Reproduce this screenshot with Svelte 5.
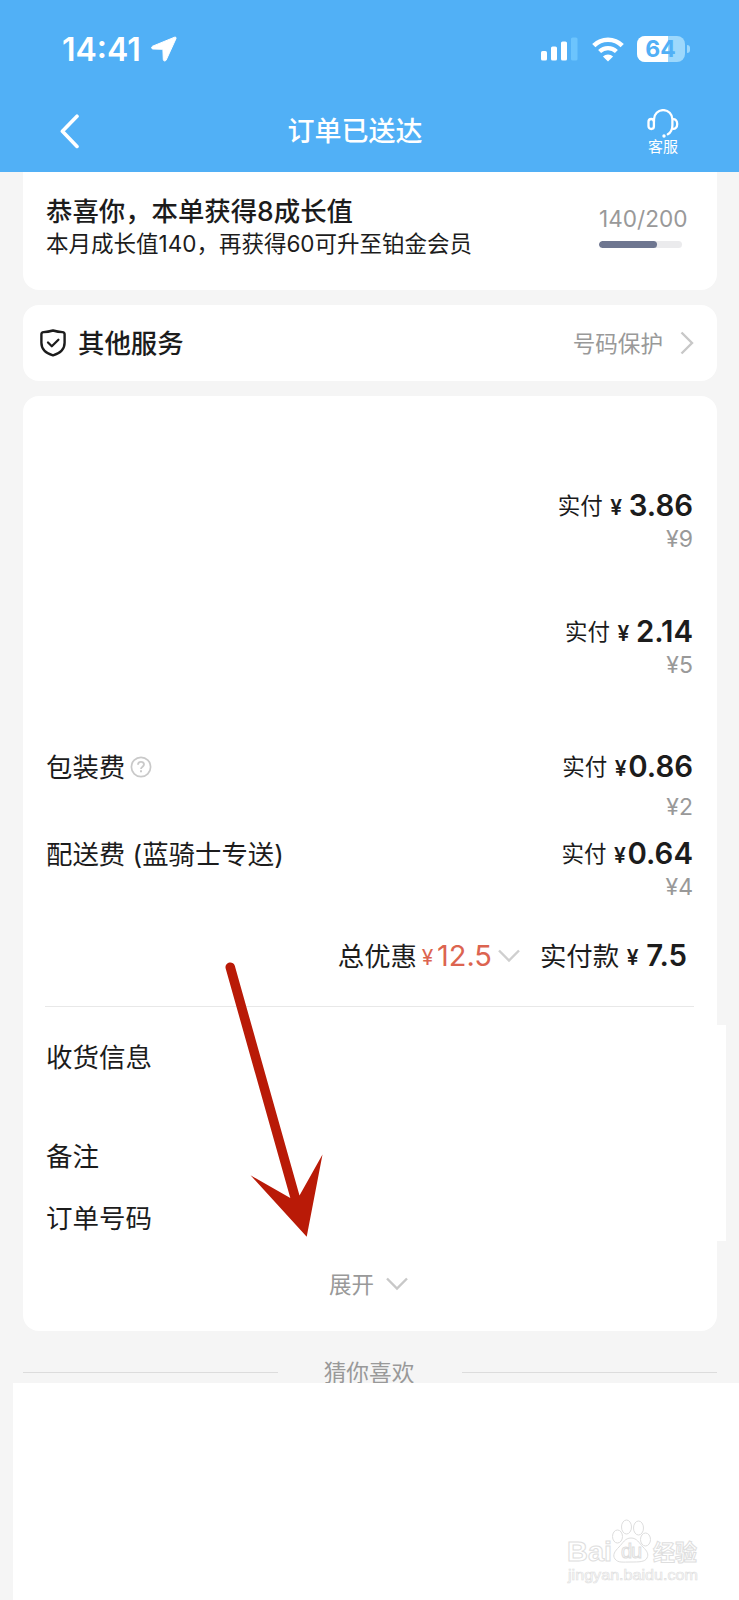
<script>
    // Line items of the order. gap is the space above the item.
    let items = [
        { id: 1, name: '', paid: '3.86', price: 9, gap: 92, spaced: true },
        { id: 2, name: '', paid: '2.14', price: 5, gap: 60, spaced: true },
        { id: 3, name: '包装费', help: true, paid: '0.86', price: 2, gap: 69, tall: true },
        { id: 4, name: '配送费 (蓝骑士专送)', paid: '0.64', price: 4, gap: 8 },
    ];
    let total = { saved: '12.5', paid: '7.5' };
    let growth = { value: 140, max: 200 };
    let battery = 64;
</script>

<main>
    <header>
        <div class="status">
            <span class="status__time">14:41</span>
            <svg class="status__location" width="26" height="26" viewBox="0 0 26 26">
                <path d="M23.6 1.2 1.6 10.2c-1.5.7-1.2 2.7.3 2.8l10 .3.4 10.3c.1 1.6 2.2 1.9 2.9.4L25 2.6c.4-1-.4-1.8-1.4-1.4z" fill="#fff" stroke="#fff" />
            </svg>
            <svg class="status__signal" width="37" height="24" viewBox="0 0 37 24">
                <rect x="0" y="14" width="6" height="9.5" rx="1.6" fill="#fff" />
                <rect x="10" y="9.5" width="6" height="14" rx="1.6" fill="#fff" />
                <rect x="20" y="4.5" width="6" height="19" rx="1.6" fill="#fff" />
                <rect x="30" y="0.5" width="6.5" height="23" rx="1.6" fill="#6cc4fd" />
            </svg>
            <svg class="status__wifi" width="32" height="25" viewBox="0 0 32 25">
                <path d="M1.800 8.700a20 20 0 0 1 28.400 0" fill="none" stroke="#fff" stroke-width="4.6" />
                <path d="M7.6 14.6a12 12 0 0 1 16.800 0" fill="none" stroke="#fff" stroke-width="4.2" />
                <path d="M16 24.400l-5.100-4.900a7.400 7.400 0 0 1 10.200 0z" fill="#fff" />
            </svg>
            <div class="battery">
                <div class="battery__fill" style="width: {battery}%"></div>
                <span class="battery__level">{battery}</span>
            </div>
            <div class="battery__cap"></div>
        </div>
        <nav>
            <svg class="back" width="20" height="35" viewBox="0 0 20 35">
                <path d="M17 2.2 2.4 17.3 17 32.4" fill="none" stroke="#fff" stroke-width="3.6" stroke-linecap="round" stroke-linejoin="round" />
            </svg>
            <h1>订单已送达</h1>
            <div class="service">
                <svg width="32" height="29" viewBox="0 0 32 29" fill="none" stroke="#fff" stroke-width="2.3">
                    <rect x="1.5" y="10" width="5.4" height="10" rx="2.7" />
                    <path d="M7 12.5V10.3a9.2 9.2 0 0 1 18.4 0V16c0 4.4-1.1 7.4-4.6 9.2" stroke-linecap="round" />
                    <path d="M25.4 10.2c3.2-.4 4.8 1.6 4.8 4.8s-1.6 5.3-4.8 4.9" />
                    <circle cx="17" cy="27" r="1.7" fill="#fff" stroke="none" />
                </svg>
                <span>客服</span>
            </div>
        </nav>
    </header>

    <section class="card growth">
        <div>
            <h2>恭喜你，本单获得8成长值</h2>
            <p>本月成长值140，再获得60可升至铂金会员</p>
        </div>
        <div class="growth__side">
            <span>{growth.value}/{growth.max}</span>
            <div class="bar"><div class="bar__fill" style="width: {growth.value / growth.max * 100}%"></div></div>
        </div>
    </section>

    <section class="card other">
        <svg width="26" height="28" viewBox="0 0 26 28" fill="none" stroke="#1c1c1c" stroke-linecap="round" stroke-linejoin="round">
            <path d="M13 1.5c3.4 1 6.200 1.500 9.400 1.600 1.400.1 2.200.8 2.200 2.200v8.500c0 6-4.600 10.600-11.600 12.600C6 24.400 1.400 19.800 1.400 13.800V5.300c0-1.400.8-2.100 2.200-2.200C6.800 3 9.600 2.500 13 1.500z" stroke-width="2.4" />
            <path d="M8 13.500l3.800 3.700 6.600-6.500" stroke-width="2.300" />
        </svg>
        <h2>其他服务</h2>
        <span>号码保护</span>
        <svg class="other__arrow" width="14" height="24" viewBox="0 0 14 24">
            <path d="M1.5 1.5 12 12 1.5 22.5" fill="none" stroke="#c8c8c8" stroke-width="2.4" />
        </svg>
    </section>

    <section class="card order">
        {#each items as item (item.id)}
            <div class="item" style="margin-top: {item.gap}px">
                <div class="item__row">
                    <span class="item__name">{item.name}</span>
                    {#if item.help}
                        <svg class="help" width="22" height="22" viewBox="0 0 22 22" fill="none" stroke="#c9c9c9">
                            <circle cx="11" cy="11" r="9.6" stroke-width="1.7" />
                            <path d="M8 8.8c0-1.8 1.300-2.900 3-2.900s3 1.100 3 2.700c0 2-3 2.200-3 4.400" stroke-width="1.8" />
                            <path d="M11 14.300v2" stroke-width="1.9" />
                        </svg>
                    {/if}
                    <span class="label">实付</span>
                    <span class="yen" class:yen--spaced={item.spaced}>¥</span>
                    <b>{item.paid}</b>
                </div>
                <div class="item__price" class:item__price--tall={item.tall}>¥{item.price}</div>
            </div>
        {/each}

        <div class="total">
            <span>总优惠</span>
            <span class="yen yen--red">¥</span>
            <span class="saved">{total.saved}</span>
            <svg class="total__arrow" width="22" height="14" viewBox="0 0 22 14">
                <path d="M1 1.5 11 11.5 21 1.5" fill="none" stroke="#cfcfcf" stroke-width="2.4" />
            </svg>
            <span>实付款</span>
            <span class="yen yen--total">¥</span>
            <b>{total.paid}</b>
        </div>

        <div class="details">
            <div class="address">收货信息</div>
            <div class="remark">备注</div>
            <div class="number">订单号码</div>
            <div class="patch"></div>
        </div>

        <div class="expand">
            <span>展开</span>
            <svg width="22" height="14" viewBox="0 0 22 14">
                <path d="M1 1.5 11 11.5 21 1.5" fill="none" stroke="#c8c8c8" stroke-width="2.4" />
            </svg>
        </div>
    </section>

    <div class="like"><span>猜你喜欢</span></div>

    <section class="feed">
        <svg class="watermark" width="140" height="70" viewBox="0 0 140 70" fill="#fff" stroke="#dedede">
            <text x="3" y="46" font-size="28" font-weight="700" textLength="45" lengthAdjust="spacingAndGlyphs">Bai</text>
            <ellipse cx="53.5" cy="21.5" rx="5" ry="6.5" />
            <ellipse cx="62.5" cy="12" rx="5" ry="7" />
            <ellipse cx="74.5" cy="13" rx="5" ry="7" />
            <ellipse cx="81.5" cy="24.5" rx="5" ry="6.5" />
            <path d="M67 23c6 0 8 5 12 9 4 4 6 7 4 11s-8 4-16 4-13 1-16-3 0-8 4-12 6-9 12-9z" />
            <text x="57" y="43" font-size="20" textLength="21">du</text>
            <text class="watermark__cjk" x="89" y="45" font-size="22" font-weight="700">经验</text>
            <text x="4" y="65" font-size="14" textLength="130" lengthAdjust="spacingAndGlyphs" stroke-width="0.6">jingyan.baidu.com</text>
        </svg>
    </section>

    <!-- red arrow to the expand button -->
    <svg class="arrow" width="104" height="276" viewBox="222 962 104 276">
        <path d="M225.6 968.2c-1.2-6 7.4-8.2 9.2-2.4L299.5 1195.5 322.5 1154.500 306.7 1236.7 250.5 1175.3 290.3 1198z" fill="#b91a07" />
    </svg>
</main>

<style>
:global(body) {
    background-color: #f5f5f5;
}

main {
    position: relative;
    width: 739px;
    height: 1600px;
    overflow: hidden;
    color: #1c1c1c;
    background-color: #f5f5f5;
    font-family: Inter, 'Noto Sans CJK SC', sans-serif;
}

h1,
h2,
p {
    margin: 0;
}

header {
    height: 172px;
    color: #fff;
    background-color: #51b0f6;
}

.status {
    display: flex;
    align-items: center;
    height: 98px;
    padding-left: 62px;
}

.status__time {
    width: 78px;
    font-size: 32px;
    font-weight: 600;
    white-space: nowrap;
}

.status__location {
    margin-left: 11px;
}

.status__signal {
    margin: 0 14px 0 364px;
}

.battery {
    position: relative;
    width: 48px;
    height: 26px;
    margin-left: 13px;
    overflow: hidden;
    border-radius: 8px;
    background-color: #9dd8fc;
}

.battery__fill {
    height: 26px;
    background-color: #fff;
}

.battery__level {
    position: absolute;
    top: 0;
    left: 0;
    width: 47px;
    color: #51b0f6;
    font-size: 23px;
    font-weight: 700;
    line-height: 26px;
    text-align: center;
}

.battery__cap {
    width: 3px;
    height: 8px;
    margin-left: 2px;
    border-radius: 0 4px 4px 0;
    background-color: #9dd8fc;
}

nav {
    display: flex;
    align-items: center;
    height: 66px;
    padding: 0 60px;
}

h1 {
    flex: 1;
    padding: 0 17px 3px 0;
    font-size: 27px;
    font-weight: 500;
    text-align: center;
}

.service {
    display: flex;
    flex-direction: column;
    align-items: center;
    width: 32px;
    padding-top: 2px;
}

.service span {
    font-size: 15px;
    line-height: 18px;
    white-space: nowrap;
}

.card {
    width: 694px;
    margin: 0 auto 15px 23px;
    border-radius: 16px;
    background-color: #fff;
    box-sizing: border-box;
}

.growth {
    display: flex;
    justify-content: space-between;
    height: 118px;
    padding: 22px 31px 0 23px;
    border-radius: 0 0 16px 16px;
}

h2 {
    font-size: 26.4px;
    font-weight: 500;
    line-height: 34px;
}

.growth p {
    font-size: 22.5px;
    line-height: 32px;
}

.growth__side {
    width: 87px;
    padding-top: 10px;
    color: #999;
    font-size: 22.6px;
    line-height: 30px;
}

.bar {
    width: 83px;
    height: 7px;
    margin-top: 7px;
    overflow: hidden;
    border-radius: 4px;
    background-color: #ebebed;
}

.bar__fill {
    height: 7px;
    border-radius: 4px;
    background-color: #6e7690;
}

.other {
    display: flex;
    align-items: center;
    height: 76px;
    padding: 0 23px 0 17px;
}

.other h2 {
    flex: 1;
    margin-left: 12px;
}

.other span {
    padding-bottom: 2px;
    color: #999;
    font-size: 22.6px;
}

.other__arrow {
    margin-left: 17px;
}

.order {
    display: flex;
    flex-direction: column;
    height: 935px;
    padding: 0 24px 0 23px;
}

.item__row,
.total {
    display: flex;
    align-items: center;
    height: 36px;
    font-size: 26.4px;
    line-height: 36px;
}

.label {
    margin-left: auto;
    font-size: 22.5px;
}

.help {
    margin-left: 5px;
}

.yen {
    width: 15px;
    margin-left: 6px;
    padding-top: 3px;
    font-size: 21px;
    font-weight: 600;
    line-height: 32px;
    text-align: center;
}

.yen--spaced {
    margin-right: 5px;
}

b {
    font-size: 29.4px;
    font-weight: 600;
}

.item__price {
    height: 30px;
    color: #999;
    font-size: 23px;
    line-height: 31px;
    text-align: right;
}

.item__price--tall {
    height: 43px;
    line-height: 44px;
}

.total {
    justify-content: flex-end;
    margin-top: 36px;
    padding-right: 6px;
}

.yen--red {
    margin-left: 3px;
    color: #dc6450;
    font-weight: 400;
}

.saved {
    margin-left: 2px;
    color: #dc6450;
    font-size: 29px;
}

.total__arrow {
    margin: 0 20px 0 6px;
}

.yen--total {
    margin-right: 6px;
}

.details {
    position: relative;
    width: 649px;
    height: 234px;
    margin: 32px 0 0 -1px;
    border-top: 1px solid #e8e8e8;
    font-size: 26.5px;
    line-height: 36px;
}

.address,
.remark,
.number {
    padding-left: 1px;
}

.address {
    margin-top: 32px;
}

.remark {
    margin-top: 63px;
}

.number {
    margin-top: 26px;
}

/* white strip that runs past the right edge of the card */
.patch {
    position: absolute;
    top: 18px;
    right: -32px;
    width: 12px;
    height: 216px;
    background-color: #fff;
}

.expand {
    display: flex;
    align-items: center;
    justify-content: center;
    height: 36px;
    margin-top: 25px;
    padding-right: 2px;
    color: #999;
    font-size: 22.5px;
}

.expand span {
    padding-bottom: 2px;
}

.expand svg {
    margin-left: 12px;
}

.like {
    display: flex;
    align-items: center;
    width: 694px;
    height: 52px;
    margin-left: 23px;
    color: #999;
    font-size: 22.7px;
    white-space: nowrap;
}

.like::before,
.like::after {
    content: '';
    flex: 1;
    height: 1px;
    background-color: #dcdcdc;
}

.like span {
    margin: 0 48px 2px 46px;
}

/* the feed slides over the lower edge of its heading */
.feed {
    position: relative;
    height: 217px;
    margin: -15px 0 0 13px;
    background-color: #fff;
}

.watermark {
    position: absolute;
    right: 35px;
    bottom: 15px;
    font-family: 'Liberation Sans', sans-serif;
}

.watermark__cjk {
    font-family: 'Noto Sans CJK SC', sans-serif;
}

.arrow {
    position: absolute;
    top: 962px;
    left: 222px;
    pointer-events: none;
}
</style>
